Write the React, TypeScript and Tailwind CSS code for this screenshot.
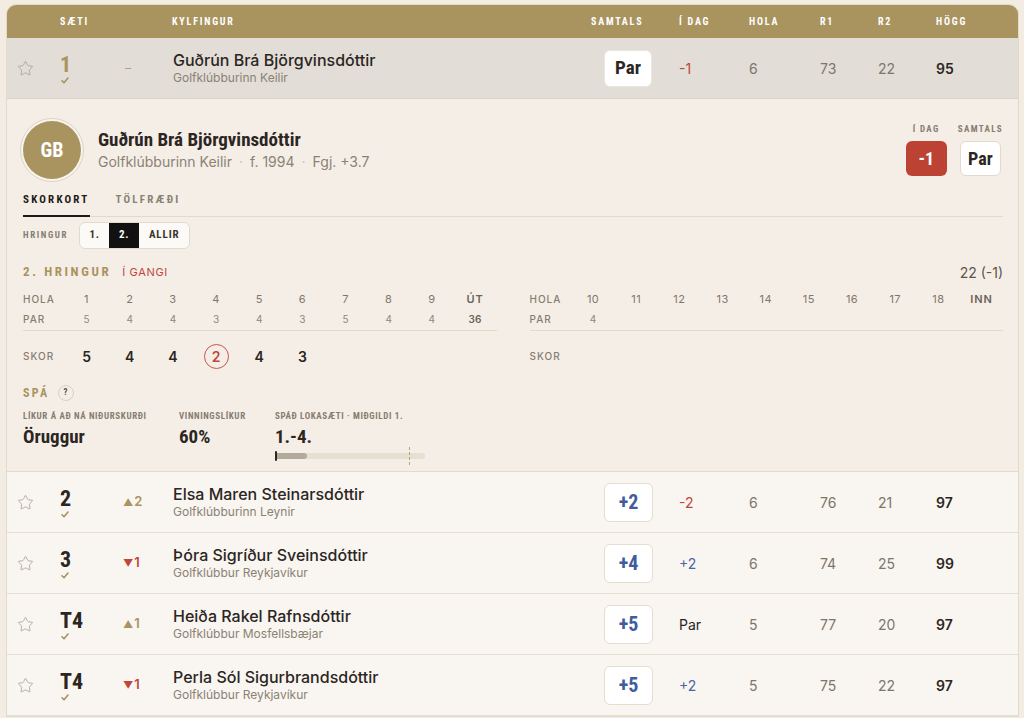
import React from 'react';
import { Star } from 'lucide-react';

type Row = {
  rank: string;
  move: 'up' | 'down' | 'none';
  moveBy?: string;
  name: string;
  club: string;
  total: string;
  today: string;
  todayTone: 'red' | 'blue' | 'dark';
  hola: string;
  r1: string;
  r2: string;
  hogg: string;
};

const rows: Row[] = [
  { rank: '2', move: 'up', moveBy: '2', name: 'Elsa Maren Steinarsdóttir', club: 'Golfklúbburinn Leynir', total: '+2', today: '-2', todayTone: 'red', hola: '6', r1: '76', r2: '21', hogg: '97' },
  { rank: '3', move: 'down', moveBy: '1', name: 'Þóra Sigríður Sveinsdóttir', club: 'Golfklúbbur Reykjavíkur', total: '+4', today: '+2', todayTone: 'blue', hola: '6', r1: '74', r2: '25', hogg: '99' },
  { rank: 'T4', move: 'up', moveBy: '1', name: 'Heiða Rakel Rafnsdóttir', club: 'Golfklúbbur Mosfellsbæjar', total: '+5', today: 'Par', todayTone: 'dark', hola: '5', r1: '77', r2: '20', hogg: '97' },
  { rank: 'T4', move: 'down', moveBy: '1', name: 'Perla Sól Sigurbrandsdóttir', club: 'Golfklúbbur Reykjavíkur', total: '+5', today: '+2', todayTone: 'blue', hola: '5', r1: '75', r2: '22', hogg: '97' },
];

const front = { holes: ['1', '2', '3', '4', '5', '6', '7', '8', '9'], par: ['5', '4', '4', '3', '4', '3', '5', '4', '4'], sum: 'ÚT', sumPar: '36', score: ['5', '4', '4', '2', '4', '3', '', '', ''] };
const back = { holes: ['10', '11', '12', '13', '14', '15', '16', '17', '18'], par: ['4', '', '', '', '', '', '', '', ''], sum: 'INN', sumPar: '', score: ['', '', '', '', '', '', '', '', ''] };

const grid = 'grid grid-cols-[53px_58px_55px_418px_88px_70px_71px_58px_58px_1fr] items-center';
const cond = "font-['Roboto_Condensed',sans-serif]";

// small "made the cut" tick under the rank
const Check = () => (
  <svg width="8" height="7" viewBox="0 0 8 7" className="ml-[1px] mt-[2px] block">
    <path d="M1 3.8 L3 5.8 L7 1" fill="none" stroke="#a99460" strokeWidth="1.6" strokeLinecap="round" strokeLinejoin="round" />
  </svg>
);

const Movement = ({ move, by }: { move: Row['move']; by?: string }) => {
  if (move === 'none') return <span className="pl-[7px] text-[12px] text-[#a8a196]">–</span>;
  const up = move === 'up';
  return (
    <span className={`pl-[5px] flex items-center gap-[1px] text-[13px] font-semibold ${up ? 'text-[#a99460]' : 'text-[#c0463b]'}`}>
      <span className="text-[10px]">{up ? '▲' : '▼'}</span>
      {by}
    </span>
  );
};

function ScoreTable({ t }: { t: typeof front }) {
  return (
    <div>
      <div className="flex h-[20px] items-center">
        <div className="w-[42px] text-[10px] font-medium tracking-[0.1em] text-[#857d70]">HOLA</div>
        {t.holes.map((h) => (
          <div key={h} className="flex-1 text-center text-[11px] tracking-[0.04em] text-[#7f776b]">{h}</div>
        ))}
        <div className="flex-1 text-center text-[11px] font-semibold tracking-[0.08em] text-[#6b6458]">{t.sum}</div>
      </div>
      <div className="flex h-[20px] items-center border-b border-[#e4d9cc] pb-[1px] box-content">
        <div className="w-[42px] text-[10px] font-medium tracking-[0.1em] text-[#857d70]">PAR</div>
        {t.par.map((p, i) => (
          <div key={i} className="flex-1 text-center text-[10px] text-[#8e877c]">{p}</div>
        ))}
        <div className="flex-1 text-center text-[10px] font-semibold text-[#6b6458]">{t.sumPar}</div>
      </div>
      <div className="flex h-[32px] items-center mt-[9px]">
        <div className="w-[42px] text-[10px] font-medium tracking-[0.1em] text-[#857d70]">SKOR</div>
        {t.score.map((s, i) => (
          <div key={i} className="flex-1 flex justify-center">
            {s === '2' ? (
              <span className="w-[25px] h-[25px] rounded-full border-[1.5px] border-[#c9544a] flex items-center justify-center text-[14px] font-semibold text-[#c0463b]">{s}</span>
            ) : (
              <span className="text-[14px] font-semibold text-[#2b261f]">{s}</span>
            )}
          </div>
        ))}
        <div className="flex-1" />
      </div>
    </div>
  );
}

export default function App() {
  return (
    <div className="min-h-screen bg-[#f3ece3] pl-[6px] pr-[5px] pt-[4px] font-['Inter',sans-serif]">
      <div className="rounded-t-[10px] border border-[#e3d9cc] overflow-hidden">
        {/* header */}
        <div className={`${grid} h-[33px] bg-[#a99460] text-white ${cond} font-bold text-[10px] tracking-[0.18em]`}>
          <div />
          <div>SÆTI</div>
          <div />
          <div className="-ml-[1px]">KYLFINGUR</div>
          <div>SAMTALS</div>
          <div>Í DAG</div>
          <div>HOLA</div>
          <div>R1</div>
          <div>R2</div>
          <div>HÖGG</div>
        </div>

        {/* leader row, expanded */}
        <div className={`${grid} h-[61px] bg-[#e2ddd6] border-b border-[#dcd3c7]`}>
          <div className="pl-[10px]"><Star size={17} strokeWidth={1.2} className="text-[#a9a39a]" /></div>
          <div className="mt-[3px]">
            <div className={`${cond} font-bold text-[22px] leading-[20px] text-[#a99460]`}>1</div>
            <Check />
          </div>
          <Movement move="none" />
          <div>
            <div className="text-[16px] leading-[20px] font-medium text-[#2b261f]">Guðrún Brá Björgvinsdóttir</div>
            <div className="text-[12px] leading-[16px] text-[#8a8274]">Golfklúbburinn Keilir</div>
          </div>
          <div>
            <div className={`ml-[13px] w-[48px] h-[37px] rounded-md bg-white border border-[#ebe5dc] flex items-center justify-center ${cond} font-bold text-[19px] text-[#2b261f]`}>Par</div>
          </div>
          <div className="text-[14px] text-[#c0463b]">-1</div>
          <div className="text-[14px] text-[#7d766b]">6</div>
          <div className="text-[14px] text-[#7d766b]">73</div>
          <div className="text-[14px] text-[#7d766b]">22</div>
          <div className="text-[14px] font-semibold text-[#2b261f]">95</div>
        </div>

        <div className="bg-[#f5eee7] h-[373px] pl-[16px] pr-[15px] pt-[19px] border-b border-[#e3d9cc]">
          {/* player head */}
          <div className="flex items-start justify-between">
            <div className="flex items-center gap-[14px] -ml-[3px]">
              <div className="w-16 h-16 rounded-full border border-[#ddd2c4] bg-[#f8f4ef] p-[2px]">
                <div className={`w-full h-full rounded-full bg-[#a99460] flex items-center justify-center ${cond} font-bold text-[20px] text-white`}>GB</div>
              </div>
              <div>
                <div className={`${cond} font-bold text-[19px] leading-[24px] text-[#2b261f]`}>Guðrún Brá Björgvinsdóttir</div>
                <div className="text-[14px] leading-[20px] text-[#8a8274] flex items-center gap-[7px]">
                  <span>Golfklúbburinn Keilir</span>
                  <span className="text-[#c9c1b5]">·</span>
                  <span>f. 1994</span>
                  <span className="text-[#c9c1b5]">·</span>
                  <span>Fgj. +3.7</span>
                </div>
              </div>
            </div>
            <div className="flex gap-[11px] mt-[5px]">
              <div className="flex flex-col items-center gap-[6px]">
                <div className={`${cond} font-bold text-[9px] leading-[12px] tracking-[0.15em] text-[#857d70]`}>Í DAG</div>
                <div className={`w-[41px] h-[35px] rounded-md bg-[#bc4234] flex items-center justify-center ${cond} font-bold text-[18px] text-white`}>-1</div>
              </div>
              <div className="flex flex-col items-center gap-[6px]">
                <div className={`${cond} font-bold text-[9px] leading-[12px] tracking-[0.15em] text-[#857d70]`}>SAMTALS</div>
                <div className={`w-[41px] h-[35px] rounded-md bg-white border border-[#e3d9cc] flex items-center justify-center ${cond} font-bold text-[18px] text-[#2b261f]`}>Par</div>
              </div>
            </div>
          </div>

          {/* tabs */}
          <div className={`mt-[8px] flex gap-[26px] border-b border-[#e4d9cc] ${cond} font-bold text-[11px] tracking-[0.2em]`}>
            <div className="pt-[2px] pb-[7px] leading-[16px] border-b-2 border-[#1d1a16] -mb-px text-[#1d1a16]">SKORKORT</div>
            <div className="pt-[2px] pb-[7px] leading-[16px] text-[#8a8274]">TÖLFRÆÐI</div>
          </div>

          {/* round selector */}
          <div className="mt-[5px] flex items-center gap-[11px]">
            <div className={`${cond} font-bold text-[9px] tracking-[0.18em] text-[#857d70]`}>HRINGUR</div>
            <div className={`flex h-[27px] rounded-md border border-[#e4d9cc] bg-[#fcfaf7] overflow-hidden ${cond} font-bold text-[11px] tracking-[0.08em]`}>
              <div className="w-[29px] flex items-center justify-center text-[#3a342c]">1.</div>
              <div className="w-[30px] flex items-center justify-center bg-[#111] text-white">2.</div>
              <div className="w-[50px] flex items-center justify-center text-[#3a342c]">ALLIR</div>
            </div>
          </div>

          {/* round title */}
          <div className="mt-[15px] flex items-center justify-between h-[16px]">
            <div className="flex items-center gap-[11px]">
              <span className={`${cond} font-bold text-[13px] tracking-[0.2em] text-[#a99460]`}>2. HRINGUR</span>
              <span className="text-[11px] tracking-[0.06em] text-[#c0463b]">Í GANGI</span>
            </div>
            <span className="text-[14px] text-[#5c5649]">22 (-1)</span>
          </div>

          {/* scorecard */}
          <div className="mt-[9px] grid grid-cols-2 gap-[33px]">
            <ScoreTable t={front} />
            <ScoreTable t={back} />
          </div>

          {/* prediction */}
          <div className="mt-[13px] flex items-center gap-[8px] h-[16px]">
            <span className={`${cond} font-bold text-[12px] tracking-[0.2em] text-[#a99460]`}>SPÁ</span>
            <span className={`w-[16px] h-[16px] rounded-full border border-[#d9cfc2] flex items-center justify-center ${cond} font-bold text-[9px] text-[#5c5649]`}>?</span>
          </div>
          <div className="mt-[10px] flex">
            <div className="w-[156px]">
              <div className={`${cond} font-bold text-[9px] leading-[10px] tracking-[0.07em] text-[#857d70]`}>LÍKUR Á AÐ NÁ NIÐURSKURÐI</div>
              <div className={`mt-[6px] ${cond} font-bold text-[19px] leading-[20px] text-[#2b261f]`}>Öruggur</div>
            </div>
            <div className="w-[96px]">
              <div className={`${cond} font-bold text-[9px] leading-[10px] tracking-[0.07em] text-[#857d70]`}>VINNINGSLÍKUR</div>
              <div className={`mt-[6px] ${cond} font-bold text-[19px] leading-[20px] text-[#2b261f]`}>60%</div>
            </div>
            <div>
              <div className={`${cond} font-bold text-[9px] leading-[10px] tracking-[0.07em] text-[#857d70]`}>SPÁÐ LOKASÆTI · MIÐGILDI 1.</div>
              <div className={`mt-[6px] ${cond} font-bold text-[19px] leading-[20px] text-[#2b261f]`}>1.-4.</div>
              <div className="relative mt-[6px] w-[150px] h-[6px] rounded-full bg-[#e8dfd3]">
                <div className="h-full w-[32px] rounded-full bg-[#b3aa9c]" />
                <div className="absolute left-0 -top-[2px] w-[2px] h-[10px] rounded-sm bg-[#2b261f]" />
                <div className="absolute left-[134px] -top-[6px] h-[18px] border-l border-dashed border-[#b9a474]" />
              </div>
            </div>
          </div>
        </div>

        {/* other rows */}
        {rows.map((r) => (
          <div key={r.name} className={`${grid} h-[61px] bg-[#f9f5f0] border-b border-[#e8dfd3]`}>
            <div className="pl-[10px]"><Star size={17} strokeWidth={1.2} className="text-[#a9a39a]" /></div>
            <div className="mt-[3px]">
              <div className={`${cond} font-bold text-[22px] leading-[20px] text-[#2b261f]`}>{r.rank}</div>
              <Check />
            </div>
            <Movement move={r.move} by={r.moveBy} />
            <div>
              <div className="text-[16px] leading-[20px] font-medium text-[#2b261f]">{r.name}</div>
              <div className="text-[12px] leading-[16px] text-[#8a8274]">{r.club}</div>
            </div>
            <div>
              <div className={`ml-[13px] w-[49px] h-[39px] rounded-md bg-white border border-[#e6dccf] flex items-center justify-center ${cond} font-bold text-[20px] text-[#3f5d9c]`}>{r.total}</div>
            </div>
            <div className={`text-[14px] ${r.todayTone === 'red' ? 'text-[#c0463b]' : r.todayTone === 'blue' ? 'text-[#4a66a3]' : 'text-[#2b261f]'}`}>{r.today}</div>
            <div className="text-[14px] text-[#7d766b]">{r.hola}</div>
            <div className="text-[14px] text-[#7d766b]">{r.r1}</div>
            <div className="text-[14px] text-[#7d766b]">{r.r2}</div>
            <div className="text-[14px] font-semibold text-[#2b261f]">{r.hogg}</div>
          </div>
        ))}
      </div>
    </div>
  );
}
